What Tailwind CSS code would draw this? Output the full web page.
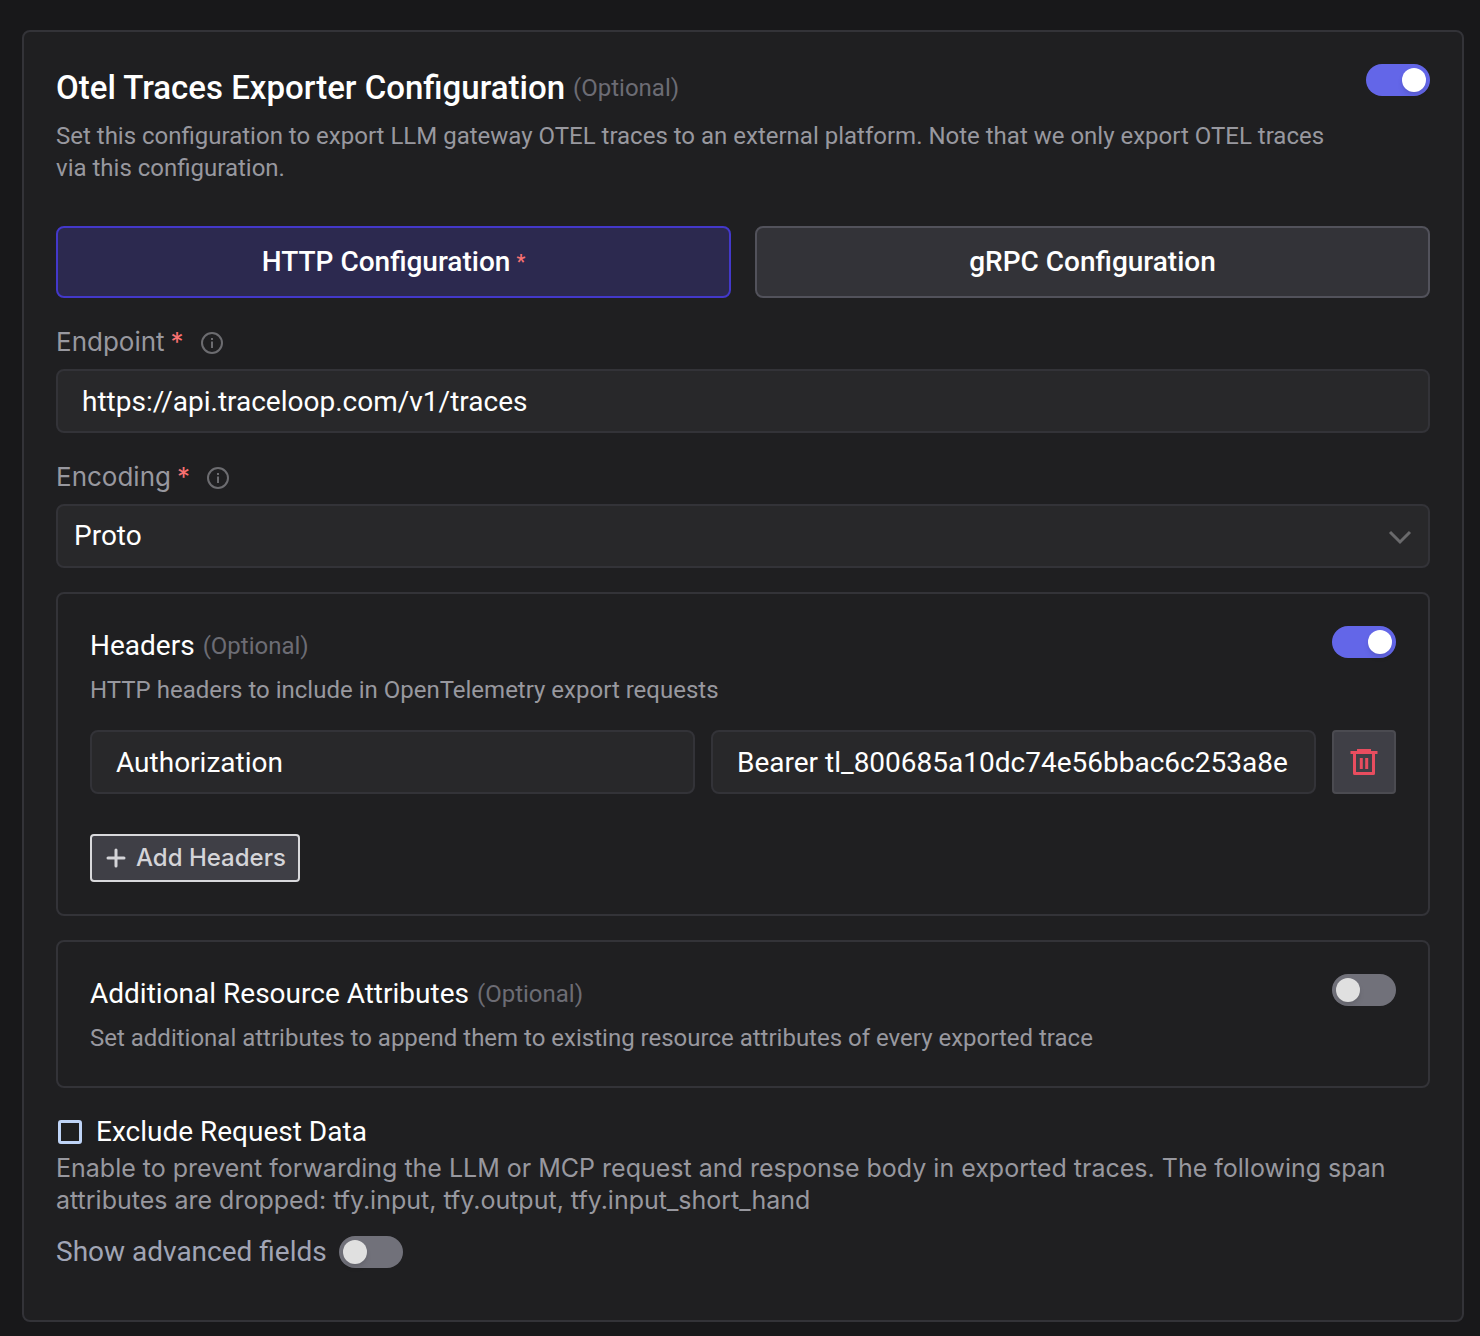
<!doctype html>
<html lang="en">
  <head>
    <meta charset="UTF-8" />
    <meta name="viewport" content="width=device-width, initial-scale=1.0" />
    <title>Otel Traces Exporter Configuration</title>
    <script src="https://cdn.jsdelivr.net/npm/@tailwindcss/browser@4"></script>
  </head>

  <body class="bg-[#18181a] min-h-screen pl-[22px] pr-4 pt-[30px] pb-[14px] font-[Roboto,sans-serif] text-white">
    <form class="bg-[#1f1f21] border-2 border-[#333338] rounded-lg p-8">
      <!-- Exporter heading -->
      <div class="flex justify-between items-start">
        <div class="max-w-[1270px]">
          <h1 class="flex items-center gap-2 text-[33px] leading-[48px] font-medium">
            <label for="exporter">Otel Traces Exporter Configuration</label>
            <span class="text-2xl font-normal text-[#6c6c74]">(Optional)</span>
          </h1>
          <p class="mt-2 text-2xl leading-8 text-[#98989f]">
            Set this configuration to export LLM gateway OTEL traces to an external platform. Note that we only export OTEL traces via this configuration.
          </p>
        </div>
        <input id="exporter" type="checkbox" role="switch" checked class="appearance-none shrink-0 w-16 h-8 p-1 rounded-full bg-[#71717a] checked:bg-[#6366e8] flex before:block before:size-6 before:rounded-full before:bg-[#e0e0e0] before:shadow-md checked:before:bg-white checked:before:ml-8" />
      </div>

      <!-- Protocol -->
      <div class="mt-[42px] grid grid-cols-2 gap-6">
        <button type="button" class="h-[72px] rounded-lg border-2 border-[#4338ca] bg-[#2c294f] text-[28px] font-medium flex items-center justify-center gap-[6px]">
          HTTP Configuration <span class="text-xl text-[#f87171]">*</span>
        </button>
        <button type="button" class="h-[72px] rounded-lg border-2 border-[#52525b] bg-[#333338] text-[28px] font-medium">
          gRPC Configuration
        </button>
      </div>

      <!-- Endpoint -->
      <div class="mt-6">
        <div class="h-[47px] pt-1 flex items-start font-[Inter,sans-serif] text-[26px] leading-8 text-[#98989f]">
          <label for="endpoint">Endpoint<span class="ml-[6px] text-[#f87171]">*</span></label>
          <svg class="ml-4 mt-[5px] size-6" viewBox="0 0 24 24" fill="none" stroke="#6c6c70" stroke-width="2">
            <circle cx="12" cy="12" r="10" />
            <path d="M12 10.5v6.5M12 7v2" />
          </svg>
        </div>
        <input id="endpoint" type="text" value="https://api.traceloop.com/v1/traces" class="block w-full h-16 px-6 rounded-lg border-2 border-[#333338] bg-[#28282a] text-[28px]" />
      </div>

      <!-- Encoding -->
      <div class="mt-6">
        <div class="h-[47px] pt-1 flex items-start font-[Inter,sans-serif] text-[26px] leading-8 text-[#98989f]">
          <label for="encoding">Encoding<span class="ml-[6px] text-[#f87171]">*</span></label>
          <svg class="ml-4 mt-[5px] size-6" viewBox="0 0 24 24" fill="none" stroke="#6c6c70" stroke-width="2">
            <circle cx="12" cy="12" r="10" />
            <path d="M12 10.5v6.5M12 7v2" />
          </svg>
        </div>
        <div class="relative">
          <select id="encoding" class="appearance-none block w-full h-16 px-4 rounded-lg border-2 border-[#333338] bg-[#28282a] text-[28px]">
            <option>Proto</option>
            <option>JSON</option>
          </select>
          <svg class="absolute right-4 top-5 size-7 pointer-events-none" viewBox="0 0 28 28" fill="none" stroke="#6a6a6c" stroke-width="3">
            <path d="M4 8l10 10 10-10" />
          </svg>
        </div>
      </div>

      <!-- Headers -->
      <section class="mt-6 border-2 border-[#333338] rounded-lg p-8">
        <div class="flex justify-between items-start">
          <div>
            <h2 class="flex items-center gap-2 text-[28px] leading-10">
              <label for="headers">Headers</label>
              <span class="text-2xl leading-10 text-[#6c6c74]">(Optional)</span>
            </h2>
            <p class="mt-2 text-2xl leading-8 text-[#98989f]">HTTP headers to include in OpenTelemetry export requests</p>
          </div>
          <input id="headers" type="checkbox" role="switch" checked class="appearance-none shrink-0 w-16 h-8 p-1 rounded-full bg-[#71717a] checked:bg-[#6366e8] flex before:block before:size-6 before:rounded-full before:bg-[#e0e0e0] before:shadow-md checked:before:bg-white checked:before:ml-8" />
        </div>
        <div class="mt-6 flex gap-4">
          <input type="text" aria-label="Header name" value="Authorization" class="flex-1 min-w-0 h-16 px-6 rounded-lg border-2 border-[#333338] bg-[#28282a] text-[28px]" />
          <input type="text" aria-label="Header value" value="Bearer tl_800685a10dc74e56bbac6c253a8e" class="flex-1 min-w-0 h-16 px-6 rounded-lg border-2 border-[#333338] bg-[#28282a] text-[28px]" />
          <button type="button" aria-label="Remove header" class="size-16 shrink-0 rounded border-2 border-[#4b4b51] bg-[#3f3f46] flex items-center justify-center">
            <svg class="size-7" viewBox="0 0 28 28" fill="none" stroke="#e84d5f" stroke-width="3">
              <path d="M.5 4.5h27" />
              <path d="M7 2.5h14" />
              <path stroke-linejoin="round" d="M4.5 5v20.5h19V5" />
              <path d="M11.3 10v11M16.7 10v11" />
            </svg>
          </button>
        </div>
        <button type="button" class="mt-10 h-12 px-3 rounded border-2 border-[#d9d9dc] bg-[#3f3f46] text-[#d4d4d8] font-[Inter,sans-serif] text-2xl font-medium flex items-center gap-2">
          <svg class="size-6" viewBox="0 0 24 24" fill="none" stroke="currentColor" stroke-width="3" stroke-linecap="round">
            <path d="M12 4v16M4 12h16" />
          </svg>
          Add Headers
        </button>
      </section>

      <!-- Resource attributes -->
      <section class="mt-6 border-2 border-[#333338] rounded-lg p-8">
        <div class="flex justify-between items-start">
          <div>
            <h2 class="flex items-center gap-2 text-[28px] leading-10">
              <label for="attributes">Additional Resource Attributes</label>
              <span class="text-2xl leading-10 text-[#6c6c74]">(Optional)</span>
            </h2>
            <p class="mt-2 text-2xl leading-8 text-[#98989f]">Set additional attributes to append them to existing resource attributes of every exported trace</p>
          </div>
          <input id="attributes" type="checkbox" role="switch" class="appearance-none shrink-0 w-16 h-8 p-1 rounded-full bg-[#71717a] checked:bg-[#6366e8] flex before:block before:size-6 before:rounded-full before:bg-[#e0e0e0] before:shadow-md checked:before:bg-white checked:before:ml-8" />
        </div>
      </section>

      <!-- Exclude request data -->
      <div class="mt-6 flex items-center gap-[14px] pl-[2px]">
        <input id="exclude" type="checkbox" aria-describedby="exclude-help" class="appearance-none size-6 rounded-[3px] border-3 border-[#bfd4f7] checked:bg-[#6366e8]" />
        <label for="exclude" class="text-[28px] leading-10">Exclude Request Data</label>
      </div>
      <p id="exclude-help" class="font-[Inter,sans-serif] text-[25px] leading-8 text-[#98989f]">
        Enable to prevent forwarding the LLM or MCP request and response body in exported traces. The following span attributes are dropped: tfy.input, tfy.output, tfy.input_short_hand
      </p>
      <div class="mt-5 mb-5 flex items-center gap-3">
        <label for="advanced" class="text-[28px] leading-8 text-[#a1a5b5]">Show advanced fields</label>
        <input id="advanced" type="checkbox" role="switch" class="appearance-none shrink-0 w-16 h-8 p-1 rounded-full bg-[#71717a] checked:bg-[#6366e8] flex before:block before:size-6 before:rounded-full before:bg-[#e0e0e0] before:shadow-md checked:before:bg-white checked:before:ml-8" />
      </div>
    </form>
  </body>
</html>
